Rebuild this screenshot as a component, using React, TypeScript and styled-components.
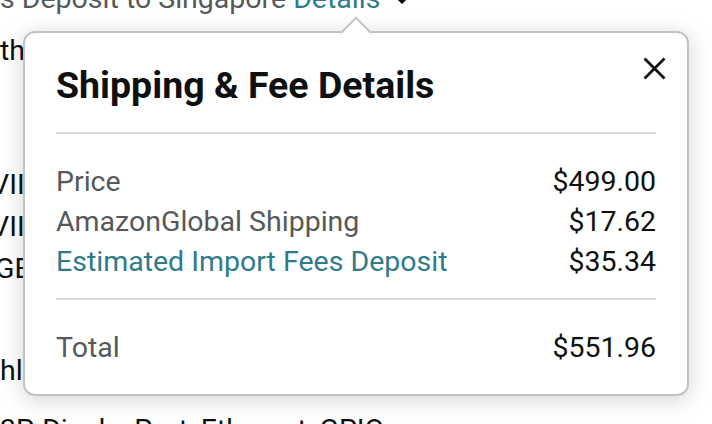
import React from "react";
import styled, { createGlobalStyle } from "styled-components";

const GlobalStyle = createGlobalStyle`
  html, body { margin: 0; padding: 0; background: #ffffff; }
  body {
    font-family: Roboto, "Liberation Sans", Arial, sans-serif;
    color: #0f1111;
    overflow: hidden;
    width: 712px;
    height: 424px;
  }
`;

const Stage = styled.div`
  position: relative;
  width: 712px;
  height: 424px;
  overflow: hidden;
`;

const Page = styled.div`
  display: flex;
  flex-direction: column;
  margin-top: -21px;
  font-size: 28.5px;
`;

const TopLine = styled.div`
  display: flex;
  align-items: baseline;
  line-height: 40px;
  color: #565959;
  white-space: nowrap;
`;

const Link = styled.span`
  color: #2e7b8b;
  margin-left: 7px;
`;

const Caret = styled.svg`
  width: 14px;
  height: 9px;
  margin-left: 15px;
  align-self: flex-start;
  margin-top: 16px;
`;

const SpecLine = styled.div<{ $gap: number; $shift: number }>`
  margin-top: ${(p) => p.$gap}px;
  margin-left: ${(p) => p.$shift}px;
  line-height: 42px;
  color: #0f1111;
  white-space: nowrap;
`;

const Popover = styled.section`
  position: absolute;
  left: 23px;
  top: 31px;
  width: 666px;
  box-sizing: border-box;
  background: #ffffff;
  border: 2px solid #bfc3c3;
  border-radius: 12px;
  box-shadow: 0 4px 22px rgba(15, 17, 17, 0.18);
  padding: 28px 31px 26px 31px;
`;

const Arrow = styled.div`
  position: absolute;
  top: -12px;
  left: 320px;
  width: 22px;
  height: 22px;
  box-sizing: border-box;
  background: #ffffff;
  border-top: 2px solid #bfc3c3;
  border-left: 2px solid #bfc3c3;
  transform: rotate(45deg);
`;

const CloseButton = styled.button`
  position: absolute;
  top: 24px;
  right: 21px;
  width: 23px;
  height: 23px;
  padding: 0;
  border: 0;
  background: transparent;
  cursor: pointer;
  display: flex;
  svg {
    display: block;
  }
`;

const Title = styled.h4`
  margin: 0;
  font-size: 37.5px;
  line-height: 48px;
  font-weight: 700;
  color: #0f1111;
`;

const Divider = styled.hr<{ $top: number }>`
  margin: ${(p) => p.$top}px 0 0 0;
  border: 0;
  height: 2px;
  background: #d5d9d9;
`;

const Rows = styled.div<{ $top: number }>`
  display: flex;
  flex-direction: column;
  margin-top: ${(p) => p.$top}px;
`;

const Row = styled.div`
  display: flex;
  justify-content: space-between;
  align-items: baseline;
  font-size: 28.5px;
  line-height: 40px;
`;

const Label = styled.span<{ $link?: boolean }>`
  color: ${(p) => (p.$link ? "#2e7b8b" : "#565959")};
`;

const Value = styled.span`
  color: #0f1111;
`;

const lines = [
  { text: "the Thermal Solution", gap: 11, shift: 0 },
  { text: "VIII Slot Mainboard", gap: 92, shift: -9 },
  { text: "VIII Expansion Card", gap: 0, shift: -9 },
  { text: "GEN Module", gap: 0, shift: -5 },
  { text: "hl Enclosure", gap: 60, shift: 0 },
  { text: "3P, DisplayPort, Ethernet, GPIO", gap: 17, shift: 0 },
];

const fees = [
  { label: "Price", value: "$499.00" },
  { label: "AmazonGlobal Shipping", value: "$17.62" },
  { label: "Estimated Import Fees Deposit", value: "$35.34", link: true },
];

export default function App() {
  return (
    <Stage>
      <GlobalStyle />
      <Page>
        <TopLine>
          s Deposit to Singapore<Link>Details</Link>
          <Caret viewBox="0 0 14 9">
            <path d="M1.5 1.5 L7 7 L12.5 1.5" fill="none" stroke="#0f1111" strokeWidth="3" />
          </Caret>
        </TopLine>
        {lines.map((l, i) => (
          <SpecLine key={i} $gap={l.gap} $shift={l.shift}>
            {l.text}
          </SpecLine>
        ))}
      </Page>
      <Popover>
        <Arrow />
        <CloseButton aria-label="Close">
          <svg width="23" height="23" viewBox="0 0 23 23">
            <path d="M1.5 1.5 L21.5 21.5 M21.5 1.5 L1.5 21.5" stroke="#0f1111" strokeWidth="2.8" fill="none" />
          </svg>
        </CloseButton>
        <Title>Shipping &amp; Fee Details</Title>
        <Divider $top={23} />
        <Rows $top={28}>
          {fees.map((f) => (
            <Row key={f.label}>
              <Label $link={f.link}>{f.label}</Label>
              <Value>{f.value}</Value>
            </Row>
          ))}
        </Rows>
        <Divider $top={16} />
        <Rows $top={28}>
          <Row>
            <Label>Total</Label>
            <Value>$551.96</Value>
          </Row>
        </Rows>
      </Popover>
    </Stage>
  );
}
